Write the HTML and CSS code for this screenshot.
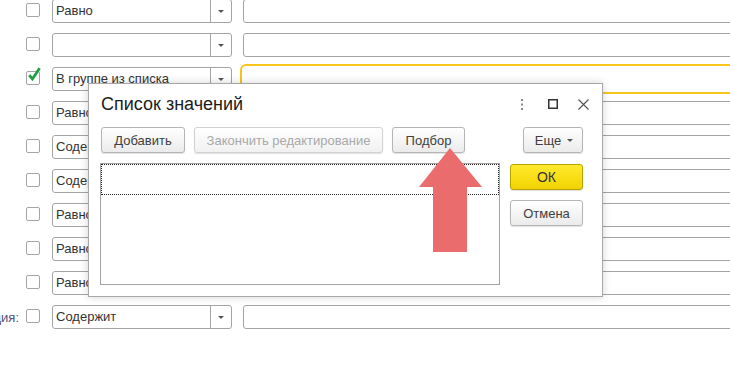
FILE: index.html
```html
<!DOCTYPE html>
<html>
<head>
  <meta charset="UTF-8">
  <title>Список значений</title>
  <link rel="stylesheet" href="styles.css">
</head>
<body>
  <div class="page">
    <div class="rows">
      <div class="row">
        <div class="label"></div>
        <span class="check"></span>
        <div class="select"><span class="select-text">Равно</span><span class="select-btn"><i class="tri"></i></span></div>
        <div class="field"></div>
      </div>
      <div class="row">
        <div class="label"></div>
        <span class="check"></span>
        <div class="select"><span class="select-text"></span><span class="select-btn"><i class="tri"></i></span></div>
        <div class="field"></div>
      </div>
      <div class="row">
        <div class="label"></div>
        <span class="check">
          <svg class="tick" width="14" height="16" viewBox="0 0 14 16"><path d="M2.2 9.2 L5.4 13 L12.6 2.2" fill="none" stroke="#1e9e45" stroke-width="2.8"/></svg>
        </span>
        <div class="select"><span class="select-text">В группе из списка</span><span class="select-btn"><i class="tri"></i></span></div>
        <div class="field focus"></div>
      </div>
      <div class="row">
        <div class="label"></div>
        <span class="check"></span>
        <div class="select"><span class="select-text">Равно</span><span class="select-btn"><i class="tri"></i></span></div>
        <div class="field"></div>
      </div>
      <div class="row">
        <div class="label"></div>
        <span class="check"></span>
        <div class="select"><span class="select-text">Содержит</span><span class="select-btn"><i class="tri"></i></span></div>
        <div class="field"></div>
      </div>
      <div class="row">
        <div class="label"></div>
        <span class="check"></span>
        <div class="select"><span class="select-text">Содержит</span><span class="select-btn"><i class="tri"></i></span></div>
        <div class="field"></div>
      </div>
      <div class="row">
        <div class="label"></div>
        <span class="check"></span>
        <div class="select"><span class="select-text">Равно</span><span class="select-btn"><i class="tri"></i></span></div>
        <div class="field"></div>
      </div>
      <div class="row">
        <div class="label"></div>
        <span class="check"></span>
        <div class="select"><span class="select-text">Равно</span><span class="select-btn"><i class="tri"></i></span></div>
        <div class="field"></div>
      </div>
      <div class="row">
        <div class="label"></div>
        <span class="check"></span>
        <div class="select"><span class="select-text">Равно</span><span class="select-btn"><i class="tri"></i></span></div>
        <div class="field"></div>
      </div>
      <div class="row">
        <div class="label"><span>Позиция:</span></div>
        <span class="check"></span>
        <div class="select"><span class="select-text">Содержит</span><span class="select-btn"><i class="tri"></i></span></div>
        <div class="field"></div>
      </div>
    </div>

    <div class="dialog">
      <div class="dialog-head">
        <div class="dialog-title">Список значений</div>
        <div class="head-icons">
          <svg class="ic-dots" width="4" height="11" viewBox="0 0 4 11"><rect x="1" y="0" width="2" height="2" fill="#888"/><rect x="1" y="4.5" width="2" height="2" fill="#888"/><rect x="1" y="9" width="2" height="2" fill="#888"/></svg>
          <svg class="ic-max" width="10" height="10" viewBox="0 0 10 10"><rect x="0.75" y="0.75" width="8.5" height="8.5" fill="none" stroke="#333" stroke-width="1.5"/></svg>
          <svg class="ic-close" width="11" height="11" viewBox="0 0 11 11"><path d="M0.5 0.5 L10.5 10.5 M10.5 0.5 L0.5 10.5" stroke="#555" stroke-width="1.2"/></svg>
        </div>
      </div>
      <div class="toolbar">
        <button class="btn btn-add">Добавить</button>
        <button class="btn btn-finish" disabled>Закончить редактирование</button>
        <button class="btn btn-pick">Подбор</button>
        <button class="btn btn-more">Еще <i class="tri"></i></button>
      </div>
      <div class="dialog-body">
        <div class="list">
          <div class="list-row"></div>
        </div>
        <div class="side">
          <button class="btn btn-ok">ОК</button>
          <button class="btn btn-cancel">Отмена</button>
        </div>
      </div>
    </div>

    <svg class="arrow" width="63" height="104" viewBox="0 0 63 104">
      <polygon points="31,0 0,39 14,39 14,104 48,104 48,39 63,39" fill="#eb6c6c"/>
    </svg>
  </div>
</body>
</html>
```

FILE: styles.css
```css
html, body {
  margin: 0;
  padding: 0;
  background: #fff;
}

body {
  font-family: "Liberation Sans", Arial, sans-serif;
  font-size: 13px;
  color: #333;
  overflow: hidden;
}

.page {
  position: relative;
  width: 730px;
  height: 388px;
  overflow: hidden;
}

.rows {
  margin-top: -1px;
}

.row {
  display: flex;
  align-items: center;
  height: 24px;
  margin-bottom: 10px;
}

.label {
  width: 19px;
  margin-right: 7px;
  display: flex;
  justify-content: flex-end;
  overflow: hidden;
  white-space: nowrap;
  color: #4f4f7a;
  font-size: 13px;
}

.check {
  position: relative;
  width: 14px;
  height: 14px;
  box-sizing: border-box;
  border: 1px solid #a4a4a4;
  border-radius: 2px;
  background: #fff;
  margin-right: 12px;
  align-self: flex-start;
  margin-top: 4px;
}

.tick {
  position: absolute;
  left: 0;
  top: -6px;
}

.select {
  display: flex;
  width: 180px;
  height: 24px;
  box-sizing: border-box;
  border: 1px solid #a4a4a4;
  border-radius: 3px;
  margin-right: 11px;
  background: #fff;
}

.select-text {
  flex: 1;
  padding-left: 3px;
  line-height: 22px;
  white-space: nowrap;
  overflow: hidden;
}

.select-btn {
  width: 20px;
  border-left: 1px solid #a4a4a4;
  display: flex;
  align-items: center;
  justify-content: center;
}

.tri {
  display: inline-block;
  width: 0;
  height: 0;
  border-left: 3px solid transparent;
  border-right: 3px solid transparent;
  border-top: 3px solid #555;
}

.field {
  flex: 1;
  height: 24px;
  box-sizing: border-box;
  border: 1px solid #a4a4a4;
  border-radius: 3px;
  margin-right: -8px;
  background: #fff;
}

.field.focus {
  border-color: #fff;
  outline: 2px solid #f6c51c;
  outline-offset: 1px;
}

/* dialog */

.dialog {
  position: absolute;
  left: 88px;
  top: 83px;
  width: 515px;
  height: 214px;
  box-sizing: border-box;
  border: 1px solid #a8a8a8;
  background: #fff;
  box-shadow: 0 0 8px rgba(0, 0, 0, 0.18);
  padding: 0 19px 0 12px;
}

.dialog-head {
  display: flex;
  align-items: center;
  height: 40px;
}

.dialog-title {
  flex: 1;
  font-size: 18px;
  color: #1c1c1c;
}

.head-icons {
  display: flex;
  align-items: center;
  margin-right: -6px;
}

.ic-dots {
  margin-right: 24px;
}

.ic-max {
  margin-right: 20px;
}

.toolbar {
  display: flex;
  gap: 9px;
  margin-top: 3px;
}

.btn {
  height: 26px;
  box-sizing: border-box;
  border: 1px solid #b5b5b5;
  border-radius: 3px;
  background: linear-gradient(#ffffff, #ebebeb);
  box-shadow: 0 1px 1px rgba(0, 0, 0, 0.12);
  font-family: "Liberation Sans", Arial, sans-serif;
  font-size: 13px;
  color: #404040;
  padding: 0;
}

.btn:disabled {
  color: #a9a9a9;
  border-color: #d2d2d2;
  background: linear-gradient(#ffffff, #f1f1f1);
}

.btn-add {
  width: 84px;
}

.btn-finish {
  width: 189px;
}

.btn-pick {
  width: 73px;
}

.btn-more {
  width: 60px;
  margin-left: auto;
  display: flex;
  align-items: center;
  justify-content: center;
  gap: 6px;
  padding-left: 2px;
}

.dialog-body {
  display: flex;
  margin-top: 10px;
}

.list {
  width: 400px;
  height: 122px;
  box-sizing: border-box;
  border: 1px solid #a4a4a4;
  margin-left: -1px;
  padding: 0;
}

.list-row {
  height: 31px;
  box-sizing: border-box;
  border: 1px dotted #222;
}

.side {
  display: flex;
  flex-direction: column;
  gap: 10px;
  margin-left: 10px;
  margin-top: 1px;
  width: 73px;
}

.btn-ok {
  width: 73px;
  border-color: #b8a200;
  background: linear-gradient(#ffea2e, #f2d300);
  color: #333;
  font-size: 14px;
}

.btn-cancel {
  width: 73px;
}

.arrow {
  position: absolute;
  left: 419px;
  top: 148px;
}
```
